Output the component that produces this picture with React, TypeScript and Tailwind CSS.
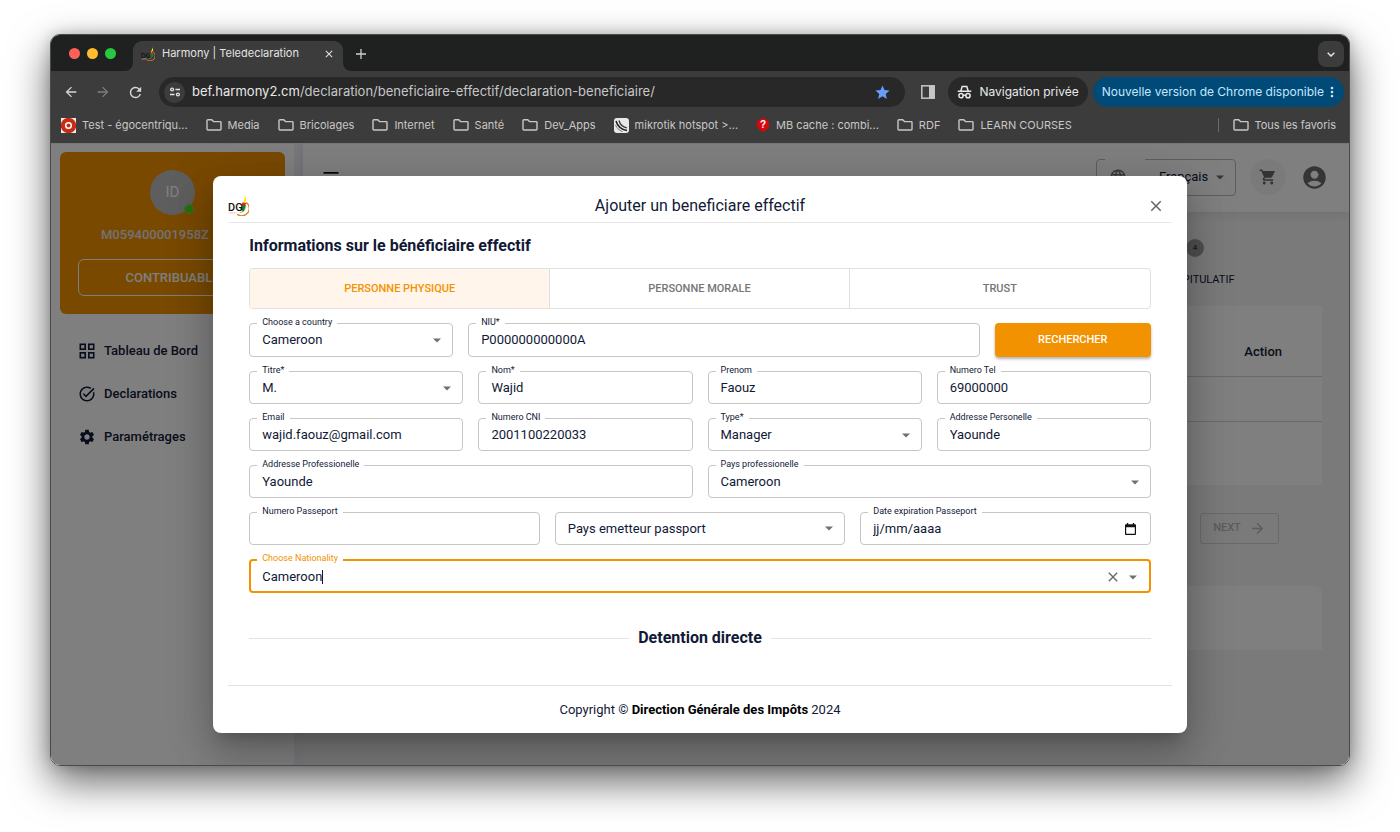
import React from "react";
import {
  MdAccountCircle,
  MdArrowBack,
  MdArrowForward,
  MdClose,
  MdLanguage,
  MdMenu,
  MdMoreVert,
  MdOutlineTaskAlt,
  MdRefresh,
  MdSettings,
  MdShoppingCart,
  MdStar,
} from "react-icons/md";

/* ---------- drawings ---------- */

function DgiLogo({ className }: { className: string }) {
  return (
    <svg viewBox="0 0 24 24" className={className} aria-hidden="true">
      <path d="M21 8.500A8 8 0 0 1 10.500 22" fill="none" stroke="#d9851e" strokeWidth="1.600" />
      <path d="M19 9.500A7 7 0 0 1 13.500 20" fill="none" stroke="#8fae4a" strokeWidth="1" />
      <path d="M15 11l3-3.500 2 4.500-1.500 6-1.500 1-2.500-4z" fill="#0f7a34" />
      <path d="M16.500 8.500l5 .5-4 4-2-1z" fill="#e02020" />
      <path d="M20 .5l.8 6-4 3.500z" fill="#ffe800" />
      <text x="0" y="18" fontFamily="Roboto, sans-serif" fontSize="12.5" fontWeight="500" fill="#111">DG</text>
      <path d="M1 20.500h9" stroke="#f0bcc4" strokeWidth="1" />
    </svg>
  );
}

function FolderIcon() {
  return (
    <svg viewBox="0 0 16 14" className="h-[14px] w-4 shrink-0" fill="none" stroke="#c7c7c7" strokeWidth="1.4" aria-hidden="true">
      <path d="M1 2.600a.9.9 0 0 1 .9-.9h3.800l1.800 1.900h6.600a.9.9 0 0 1 .9.9v6.600a.9.9 0 0 1-.9.9H1.900a.9.9 0 0 1-.9-.9z" />
    </svg>
  );
}

function TargetIcon() {
  return (
    <svg viewBox="0 0 15 15" className="size-[15px] shrink-0" aria-hidden="true">
      <rect width="15" height="15" fill="#f3e9e6" />
      <circle cx="7.5" cy="7.5" r="7.7" fill="#c62d17" />
      <circle cx="7.5" cy="7.5" r="2.800" fill="none" stroke="#fff" strokeWidth="1.500" />
    </svg>
  );
}

function MikrotikIcon() {
  return (
    <svg viewBox="0 0 15 15" className="size-[15px] shrink-0" fill="none" aria-hidden="true">
      <rect width="15" height="15" rx="3" fill="#e8e8e8" />
      <path d="M2 3c1.500 5 4.500 8.500 11 9.500" stroke="#222" strokeWidth="1.600" />
      <path d="M5 2.500c1 4 3.500 6.500 8 7.500" stroke="#333" strokeWidth="1.200" />
      <path d="M1.500 7c1.500 3.500 3.500 5.500 7 6.500" stroke="#777" strokeWidth="1" />
    </svg>
  );
}

function QuestionIcon() {
  return (
    <svg viewBox="0 0 14 15" className="h-[15px] w-[14px] shrink-0" aria-hidden="true">
      <path d="M7 .5a6 6 0 0 1 2.500 11.500L7 14.500 4.500 12A6 6 0 0 1 7 .5z" fill="#d9070b" />
      <text x="7" y="10" textAnchor="middle" fontFamily="Liberation Sans" fontWeight="700" fontSize="10" fill="#fff">?</text>
    </svg>
  );
}

function TuneIcon() {
  return (
    <svg viewBox="0 0 14 12" className="h-[10px] w-3" fill="none" stroke="#e3e3e3" strokeWidth="1.600" aria-hidden="true">
      <circle cx="3.500" cy="3" r="1.700" />
      <path d="M7.500 3H13M1 9h5.500" />
      <circle cx="10.500" cy="9" r="1.700" />
    </svg>
  );
}

function IncognitoIcon() {
  return (
    <svg viewBox="0 0 15 14" className="h-[14px] w-[15px]" fill="none" stroke="#e8e8e8" strokeWidth="1.500" aria-hidden="true">
      <path d="M3.800 6L5.200 1.500h4.600L11.200 6M.7 6.300h13.600" />
      <circle cx="4" cy="10.700" r="2.100" />
      <circle cx="11" cy="10.700" r="2.100" />
      <path d="M6 10.300h3" />
    </svg>
  );
}

function SidePanelIcon() {
  return (
    <svg viewBox="0 0 14 14" className="size-[14px]" aria-hidden="true">
      <rect x=".8" y=".8" width="12.400" height="12.400" fill="none" stroke="#c7c7c7" strokeWidth="1.500" />
      <rect x="8" y="1" width="5" height="12" fill="#c7c7c7" />
    </svg>
  );
}

function DashboardIcon() {
  return (
    <svg viewBox="0 0 16 16" className="size-4" fill="none" stroke="#111936" strokeWidth="1.600" aria-hidden="true">
      <rect x="1.300" y="1.300" width="4.900" height="4.900" />
      <rect x="9.800" y="1.300" width="4.900" height="4.900" />
      <rect x="1.300" y="9.800" width="4.900" height="4.900" />
      <rect x="9.800" y="9.800" width="4.900" height="4.900" />
    </svg>
  );
}

function CalendarIcon() {
  return (
    <svg viewBox="0 0 12 13" className="h-3 w-[11px]" aria-hidden="true">
      <path d="M2 0h1.500v1.300h5V0H10v1.300h1a1 1 0 0 1 1 1V12a1 1 0 0 1-1 1H1a1 1 0 0 1-1-1V2.300a1 1 0 0 1 1-1h1zM1.300 4.500v7.200h9.400V4.500z" fill="#111" />
    </svg>
  );
}

function Caret() {
  return (
    <svg viewBox="0 0 10 5" className="h-[5px] w-2 shrink-0" aria-hidden="true">
      <path d="M0 0h10L5 5z" fill="#707070" />
    </svg>
  );
}

/* ---------- browser chrome ---------- */

function TabStrip() {
  return (
    <div className="flex h-[35px] items-end bg-[#1f2120] pr-[5px]">
      <div className="flex h-[35px] items-center gap-[7px] pl-[18px]">
        <span className="size-[11px] rounded-full bg-[#ff5f57]" />
        <span className="size-[11px] rounded-full bg-[#febc2e]" />
        <span className="size-[11px] rounded-full bg-[#28c840]" />
      </div>
      <svg viewBox="0 0 8 8" className="ml-[9px] size-2" aria-hidden="true">
        <path d="M8 0v8H0a8 8 0 0 0 8-8z" fill="#3c3c3c" />
      </svg>
      <div className="flex h-[30px] w-[210px] items-center rounded-t-[9px] bg-[#3c3c3c] pb-[5px] pl-2">
        <DgiLogo className="size-[14px]" />
        <span className="ml-[7px] flex-1 text-[11px] text-[#e3e3e3]">Harmony | Teledeclaration</span>
        <button type="button" aria-label="Fermer l'onglet" className="mr-2 text-[#e3e3e3]">
          <MdClose size={12} />
        </button>
      </div>
      <svg viewBox="0 0 8 8" className="size-2" aria-hidden="true">
        <path d="M0 0v8h8a8 8 0 0 1-8-8z" fill="#3c3c3c" />
      </svg>
      <button type="button" aria-label="Nouvel onglet" className="flex h-[35px] w-5 items-center justify-center">
        <svg viewBox="0 0 10 10" className="size-[10px]" stroke="#d0d0d0" strokeWidth="1.300" aria-hidden="true">
          <path d="M5 0v10M0 5h10" />
        </svg>
      </button>
      <div className="flex-1" />
      <button type="button" aria-label="Rechercher dans les onglets" className="mb-1 flex size-[26px] items-center justify-center rounded-lg bg-[#3c3c3c]">
        <svg viewBox="0 0 8 5" className="h-[5px] w-2" fill="none" stroke="#e3e3e3" strokeWidth="1.500" aria-hidden="true">
          <path d="M.7.7L4 4 7.300.7" />
        </svg>
      </button>
    </div>
  );
}

function Toolbar() {
  return (
    <div className="flex h-[42px] items-center pl-3 pr-[5px]">
      <button type="button" aria-label="Retour" className="text-[#d6d6d6]">
        <MdArrowBack size={16} />
      </button>
      <button type="button" aria-label="Avancer" className="ml-4 text-[#7d7d7d]">
        <MdArrowForward size={16} />
      </button>
      <button type="button" aria-label="Actualiser" className="ml-4 text-[#d6d6d6]">
        <MdRefresh size={17} />
      </button>
      <div className="ml-[15px] flex h-[30px] min-w-0 flex-1 items-center rounded-full bg-[#282828] pl-[5px] pr-[14px]">
        <span className="flex size-[21px] items-center justify-center rounded-full bg-[#3c3c3c]">
          <TuneIcon />
        </span>
        <span className="ml-[7px] flex-1 truncate text-[13px] text-[#c7c7c7]">
          <span className="text-[#e8e8e8]">bef.harmony2.cm</span>/declaration/beneficiaire-effectif/declaration-beneficiaire/
        </span>
        <MdStar size={17} className="text-[#669df6]" />
      </div>
      <button type="button" aria-label="Panneau latéral" className="ml-4">
        <SidePanelIcon />
      </button>
      <button type="button" className="ml-[13px] flex h-[30px] items-center gap-[7px] rounded-full bg-[#282828] px-[9px] text-xs text-[#e8e8e8]">
        <IncognitoIcon />
        Navigation privée
      </button>
      <button type="button" className="ml-[5px] flex h-[30px] items-center rounded-full bg-[#004a77] pl-[9px] pr-1 text-xs text-[#c2e7ff]">
        Nouvelle version de Chrome disponible
        <MdMoreVert size={16} />
      </button>
    </div>
  );
}

const bookmarks: { label: string; icon?: React.ReactNode }[] = [
  { label: "Test - égocentriqu...", icon: <TargetIcon /> },
  { label: "Media" },
  { label: "Bricolages" },
  { label: "Internet" },
  { label: "Santé" },
  { label: "Dev_Apps" },
  { label: "mikrotik hotspot >...", icon: <MikrotikIcon /> },
  { label: "MB cache : combi...", icon: <QuestionIcon /> },
  { label: "RDF" },
  { label: "LEARN COURSES" },
];

function BookmarkBar() {
  return (
    <nav aria-label="Favoris" className="flex h-[31px] items-center gap-[18px] border-b border-[#777] pb-[6px] pl-[10px] pr-[13px] text-[11px] text-[#c7c7c7]">
      {bookmarks.map((b) => (
        <a key={b.label} href="#" className="flex items-center gap-[6px] whitespace-nowrap">
          {b.icon ?? <FolderIcon />}
          {b.label}
        </a>
      ))}
      <div className="flex-1" />
      <div className="flex items-center gap-[14px]">
        <span className="h-[14px] w-px bg-[#6a6a6a]" />
        <a href="#" className="flex items-center gap-[6px] whitespace-nowrap">
          <FolderIcon />
          Tous les favoris
        </a>
      </div>
    </nav>
  );
}

/* ---------- application page ---------- */

const menu = [
  { label: "Tableau de Bord", icon: <DashboardIcon /> },
  { label: "Declarations", icon: <MdOutlineTaskAlt size={18} /> },
  { label: "Paramétrages", icon: <MdSettings size={18} /> },
];

function Sidebar() {
  return (
    <aside className="w-[243px] shrink-0 bg-white px-[9px] pt-2">
      <div className="flex h-[162px] flex-col items-center rounded-md bg-[#f39200] pt-[18px] text-white">
        <div className="relative flex size-[45px] items-center justify-center rounded-full bg-[#bdbdbd] text-[15px]">
          ID
          <span className="absolute bottom-px right-px size-[10px] rounded-full border border-[#8fd07c] bg-[#4ae018]" />
        </div>
        <p className="mt-[10px] w-full pl-[41px] text-[13px] font-medium leading-5 text-[#e6e6e6]">M059400001958Z</p>
        <button type="button" className="mt-[14px] h-[37px] w-[189px] rounded-md border border-white text-[13px] font-medium">
          CONTRIBUABLE
        </button>
      </div>
      <nav className="mt-[15px] flex flex-col">
        {menu.map((m) => (
          <a key={m.label} href="#" className="flex h-[43px] items-center gap-2 pl-[18px] text-[13px] font-medium text-[#111936]">
            <span className="flex w-[18px] justify-center">{m.icon}</span>
            {m.label}
          </a>
        ))}
      </nav>
    </aside>
  );
}

function Page() {
  return (
    <div className="flex min-h-0 flex-1">
      <Sidebar />
      <div className="w-[9px] shrink-0 bg-[#f0f1f6]" />
      <div className="flex min-w-0 flex-1 flex-col bg-[#f4f4f4]">
        <header className="flex h-[68px] shrink-0 items-center bg-white pb-[2px] pl-[18px] pr-[21px] shadow-[0_2px_8px_rgba(120,140,170,0.2)]">
          <button type="button" aria-label="Menu" className="text-[#111]">
            <MdMenu size={20} />
          </button>
          <div className="flex-1" />
          <fieldset className="mb-[3px] h-10 w-[140px] min-w-0 rounded border border-[#bbb]">
            <legend className="ml-2 h-[7px] w-10" />
            <div className="flex h-[29px] items-center pl-3 pr-[11px]">
              <MdLanguage size={18} className="text-[#757575]" />
              <select aria-label="Langue" className="ml-8 min-w-0 flex-1 appearance-none text-[13px] text-[#111936]">
                <option>Français</option>
              </select>
              <Caret />
            </div>
          </fieldset>
          <button type="button" aria-label="Panier" className="ml-[14px] flex size-9 items-center justify-center rounded-full bg-[#f5f5f5] text-[#666]">
            <MdShoppingCart size={18} />
          </button>
          <button type="button" aria-label="Compte" className="ml-[15px] text-[#6a6a6a]">
            <MdAccountCircle size={27} />
          </button>
        </header>
        <main className="flex flex-col pr-[27px]">
          <div className="mr-[87px] mt-[27px] flex w-20 flex-col items-center self-end">
            <span className="flex size-[18px] items-center justify-center rounded-full bg-[#9e9e9e] text-[8px] text-[#111936]">4</span>
            <span className="mt-4 text-[11px] leading-[14px] text-[#111936]">RÉCAPITULATIF</span>
          </div>
          <table className="mt-[19px] w-full bg-white text-right text-[13px] text-[#111936]">
            <tbody>
              <tr className="h-[70px] border-b border-[#d5d5d5]">
                <th className="pr-10 pt-[22px] font-medium">Action</th>
              </tr>
              <tr className="h-[45px] border-b border-[#d5d5d5]">
                <td />
              </tr>
              <tr className="h-16">
                <td />
              </tr>
            </tbody>
          </table>
          <button type="button" disabled className="mr-[43px] mt-7 flex h-[31px] w-[79px] items-center justify-center gap-2 self-end rounded-[3px] border border-[#d2d2d2] text-[11px] font-medium text-[#b9b9b9]">
            NEXT
            <MdArrowForward size={17} />
          </button>
          <section className="mt-[42px] h-16 rounded-t-lg bg-white" />
        </main>
      </div>
    </div>
  );
}

/* ---------- dialog ---------- */

type FieldProps = {
  id: string;
  label?: string;
  value?: string;
  kind?: "text" | "select";
  tall?: boolean;
  end?: React.ReactNode;
};

function Field({ id, label, value = "", kind = "text", tall, end }: FieldProps) {
  const height = !label ? "h-[33px]" : tall ? "h-10" : "h-[39px]";
  return (
    <fieldset className={`${height} min-w-0 self-end rounded border border-[#c6c6c6]`}>
      {label && (
        <legend className="ml-[7px] h-[13px] px-[5px] text-[9px] leading-[10px]">
          <label htmlFor={id} className="block">{label}</label>
        </legend>
      )}
      <div className={`flex items-center pl-3 ${kind === "select" ? "pr-[11px]" : "pr-[14px]"} ${label ? "h-5" : "h-[31px]"}`}>
        {kind === "select" ? (
          <>
            <select id={id} aria-label={label ? undefined : value} className="h-5 min-w-0 flex-1 appearance-none text-[13px] leading-5 outline-none">
              <option>{value}</option>
            </select>
            <Caret />
          </>
        ) : (
          <input id={id} type="text" defaultValue={value} className="h-5 w-full min-w-0 flex-1 text-[13px] leading-5 outline-none" />
        )}
        {end}
      </div>
    </fieldset>
  );
}

function NationalityField() {
  return (
    <fieldset className="h-10 min-w-0 rounded border-2 border-[#f39200]">
      <legend className="ml-[6px] h-[14px] px-[5px] text-[9px] leading-[10px] text-[#f39200]">
        <label htmlFor="nationality" className="block">Choose Nationality</label>
      </legend>
      <div className="flex h-5 items-center pl-[11px] pr-3">
        <input id="nationality" type="text" defaultValue="Cameroon" className="field-sizing-content h-5 text-[13px] leading-5 outline-none" />
        <span className="h-[14px] w-px bg-[#111936]" />
        <div className="flex-1" />
        <button type="button" aria-label="Effacer" className="mr-2 text-[#666]">
          <MdClose size={16} />
        </button>
        <Caret />
      </div>
    </fieldset>
  );
}

const tabs = ["PERSONNE PHYSIQUE", "PERSONNE MORALE", "TRUST"];

function BeneficiaryDialog() {
  return (
    <div role="dialog" aria-labelledby="dialog-title" className="w-3/4 rounded-lg bg-white text-[#111936] shadow-[0_11px_15px_-7px_rgba(0,0,0,0.2),0_24px_38px_3px_rgba(0,0,0,0.14),0_9px_46px_8px_rgba(0,0,0,0.12)]">
      <header className="mx-[15px] grid h-[47px] grid-cols-[1fr_auto_1fr] items-center border-b border-[#e8e8e8] pt-[13px]">
        <DgiLogo className="size-[21px]" />
        <h1 id="dialog-title" className="text-base leading-8">Ajouter un beneficiare effectif</h1>
        <button type="button" aria-label="Fermer" className="mr-[7px] justify-self-end text-[#666]">
          <MdClose size={18} />
        </button>
      </header>

      <form className="flex flex-col gap-2 px-9 pt-3">
        <h2 className="mb-[3px] text-base font-bold leading-[22px]">Informations sur le bénéficiaire effectif</h2>
        <div className="grid h-[41px] grid-cols-3 divide-x divide-[#e0e0e0] overflow-hidden rounded border border-[#e0e0e0] text-[11px] font-medium">
          {tabs.map((t, i) => (
            <button key={t} type="button" aria-pressed={i === 0} className={i === 0 ? "bg-[#fff5ea] pt-px text-[#f39200]" : "pt-px text-[#757575]"}>
              {t}
            </button>
          ))}
        </div>
        <div className="grid grid-cols-[204fr_512fr_156fr] gap-x-[15px]">
          <Field id="country" label="Choose a country" value="Cameroon" kind="select" tall />
          <Field id="niu" label="NIU*" value="P000000000000A" tall />
          <button type="button" className="h-[34px] self-end rounded bg-[#f39200] text-[11px] font-medium text-white shadow-[0_2px_3px_rgba(0,0,0,0.3)]">
            RECHERCHER
          </button>
        </div>
        <div className="grid grid-cols-4 gap-x-[15px] gap-y-2">
          <Field id="title" label="Titre*" value="M." kind="select" />
          <Field id="lastname" label="Nom*" value="Wajid" />
          <Field id="firstname" label="Prenom" value="Faouz" />
          <Field id="phone" label="Numero Tel" value="69000000" />
          <Field id="email" label="Email" value="wajid.faouz@gmail.com" />
          <Field id="cni" label="Numero CNI" value="2001100220033" />
          <Field id="type" label="Type*" value="Manager" kind="select" />
          <Field id="address" label="Addresse Personelle" value="Yaounde" />
        </div>
        <div className="grid grid-cols-2 gap-x-[15px]">
          <Field id="work-address" label="Addresse Professionelle" value="Yaounde" />
          <Field id="work-country" label="Pays professionelle" value="Cameroon" kind="select" />
        </div>
        <div className="grid grid-cols-3 gap-x-[15px]">
          <Field id="passport" label="Numero Passeport" />
          <Field id="passport-country" value="Pays emetteur passport" kind="select" />
          <Field
            id="passport-expiry"
            label="Date expiration Passeport"
            value="jj/mm/aaaa"
            end={
              <button type="button" aria-label="Ouvrir le calendrier">
                <CalendarIcon />
              </button>
            }
          />
        </div>
        <NationalityField />
        <div className="mb-9 mt-[26px] flex items-center gap-[9px]">
          <span className="h-px flex-1 bg-[#e3e3e3]" />
          <h2 className="text-base font-bold leading-[22px]">Detention directe</h2>
          <span className="h-px flex-1 bg-[#e3e3e3]" />
        </div>
      </form>

      <footer className="mx-[15px] border-t border-[#e3e3e3] pb-[13px] pt-[14px] text-center text-[13px] leading-5">
        Copyright © <strong className="font-bold text-black">Direction Générale des Impôts</strong> 2024
      </footer>
    </div>
  );
}

export default function App() {
  return (
    <div className="flex min-h-screen flex-col bg-white px-[50px] pb-[66px] pt-[34px] font-['Roboto',sans-serif]">
      <div className="flex flex-1 flex-col overflow-hidden rounded-[10px] border border-[#4a4a4a] shadow-[0_16px_40px_rgba(0,0,0,0.6),0_0_14px_rgba(0,0,0,0.2)]">
        <div className="bg-[#3c3c3c] pt-px font-['Inter',sans-serif] [background-image:linear-gradient(#1f2120_1px,transparent_1px)]">
          <TabStrip />
          <Toolbar />
          <BookmarkBar />
        </div>
        <div className="relative flex flex-1 flex-col">
          <Page />
          <div className="absolute inset-0 flex items-start justify-center bg-black/50 pt-8">
            <BeneficiaryDialog />
          </div>
        </div>
      </div>
    </div>
  );
}
